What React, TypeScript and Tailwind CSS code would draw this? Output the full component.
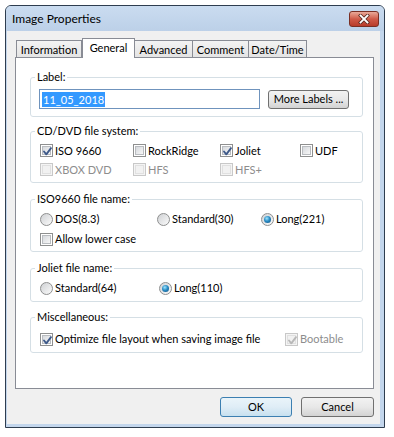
import type { ReactNode } from "react";

const ui = "font-['Lato','Noto_Sans',sans-serif] text-[11px] leading-[14px] text-black";

function CheckMark({ disabled }: { disabled?: boolean }) {
  return (
    <svg viewBox="0 0 13 13" className="absolute inset-0 h-[13px] w-[13px]">
      <path
        d="M3 6.5 L5.3 9.3 L10 3.2"
        fill="none"
        stroke={disabled ? "#b8b8b8" : "#3f5a8a"}
        strokeWidth="1.9"
        strokeLinecap="round"
        strokeLinejoin="round"
      />
    </svg>
  );
}

function Check({ label, checked, disabled }: { label: string; checked?: boolean; disabled?: boolean }) {
  return (
    <div className="flex items-center gap-[2px] whitespace-nowrap">
      <span
        className={`relative block h-[13px] w-[13px] shrink-0 border p-[1px] ${
          disabled ? "border-[#c8c8c8] bg-[#f4f4f4]" : "border-[#8e8f8f] bg-white"
        }`}
      >
        <span
          className={`block h-full w-full border ${
            disabled
              ? "border-[#e0e0e0] bg-[#f1f1f1]"
              : "border-[#b9bcc0] bg-gradient-to-br from-[#d6d9dd] to-[#f7f7f7]"
          }`}
        />
        {checked && <CheckMark disabled={disabled} />}
      </span>
      <span className={disabled ? "text-[#8d8d8d]" : ""}>{label}</span>
    </div>
  );
}

function Radio({ label, checked }: { label: string; checked?: boolean }) {
  return (
    <div className="flex items-center gap-[2px] whitespace-nowrap">
      <span className="flex h-[13px] w-[13px] shrink-0 items-center justify-center rounded-full border border-[#8e8f8f] bg-gradient-to-br from-[#cfd1d4] to-[#fbfbfb]">
        {checked && (
          <span className="block h-[7px] w-[7px] rounded-full bg-[radial-gradient(circle_at_40%_35%,#9fe6ff_0%,#2b8cc4_45%,#0d4f80_100%)]" />
        )}
      </span>
      <span>{label}</span>
    </div>
  );
}

function Group({ title, className, children }: { title: string; className?: string; children: ReactNode }) {
  return (
    <fieldset className={`rounded-[3px] border border-[#d5dfe5] ${className ?? ""}`}>
      <legend className="ml-[4px] px-[2px] leading-[14px]">{title}</legend>
      {children}
    </fieldset>
  );
}

function Tab({ label, active, width }: { label: string; active?: boolean; width: string }) {
  if (active) {
    return (
      <div
        className={`relative z-10 flex h-[20px] ${width} items-start justify-center border border-b-0 border-[#898c95] bg-white pt-[2px]`}
      >
        {label}
      </div>
    );
  }
  return (
    <div
      className={`flex h-[18px] ${width} items-start justify-center border border-b-0 border-l-0 border-[#898c95] bg-gradient-to-b from-[#f3f3f3] to-[#e3e3e3] pt-[2px] first:border-l`}
    >
      {label}
    </div>
  );
}

function Button({ label, def, className }: { label: string; def?: boolean; className?: string }) {
  return (
    <div
      className={`flex items-center justify-center rounded-[3px] border ${
        def
          ? "border-[#3c7fb1] bg-gradient-to-b from-[#eaf4fa] via-[#dfedf6] to-[#c7e0ef]"
          : "border-[#707070] bg-gradient-to-b from-[#f2f2f2] via-[#e8e8e8] to-[#d3d3d3]"
      } ${className ?? ""}`}
    >
      {label}
    </div>
  );
}

export default function App() {
  return (
    <div className={`h-[437px] w-[394px] bg-white pl-[5px] pt-[5px] ${ui}`}>
      <div className="flex h-[423px] w-[380px] flex-col overflow-hidden rounded-t-[6px] border border-[#2e3d4f] bg-[#c3d6ec]">
        {/* Title bar */}
        <div className="flex h-[25px] shrink-0 items-center justify-between bg-gradient-to-b from-[#cadcf0] to-[#bcd0e8] pl-[6px] pr-[5px]">
          <span className="text-[12px]">Image Properties</span>
          <div className="flex h-[16px] w-[30px] items-center justify-center rounded-[3px] border border-[#7a2f24] bg-gradient-to-b from-[#e9a999] via-[#cf5a48] to-[#b83b2a]">
            <svg viewBox="0 0 12 10" className="h-[10px] w-[12px]">
              <path d="M2.5 1.5 L9.5 8.5 M9.5 1.5 L2.5 8.5" stroke="#5a2a22" strokeWidth="3.4" strokeLinecap="square" />
              <path d="M2.5 1.5 L9.5 8.5 M9.5 1.5 L2.5 8.5" stroke="#ffffff" strokeWidth="1.8" strokeLinecap="square" />
            </svg>
          </div>
        </div>

        {/* Frame + client */}
        <div className="flex flex-1 flex-col pb-[3px] pl-[1px] pr-[4px]">
          <div className="flex flex-1 flex-col bg-[#f0f0f0] pl-[8px] pr-[6px] pt-[7px]">
            {/* Tabs */}
            <div className="flex h-[20px] items-end pl-[1px]">
              <Tab label="Information" width="w-[66px]" />
              <Tab label="General" width="w-[53px]" active />
              <Tab label="Advanced" width="w-[58px]" />
              <Tab label="Comment" width="w-[56px]" />
              <Tab label="Date/Time" width="w-[58px]" />
            </div>

            {/* Tab panel */}
            <div className="-mt-[1px] flex h-[332px] flex-col border border-[#898c95] bg-white pl-[14px] pr-[10px] pt-[12px]">
              <Group title="Label:">
                <div className="flex items-center gap-[8px] pb-[7px] pl-[8px] pt-[5px]">
                  <div className="flex h-[20px] w-[221px] items-center border border-[#6f93bd] bg-white pl-[2px]">
                    <span className="bg-[#3399ff] px-[1px] leading-[15px] text-white">11_05_2018</span>
                  </div>
                  <Button label="More Labels ..." className="h-[19px] w-[81px]" />
                </div>
              </Group>

              <Group title="CD/DVD file system:" className="mt-[7px]">
                <div className="grid grid-cols-[93px_87px_80px_auto] pb-[3px] pl-[9px] pt-[3px] [&>div]:h-[19px]">
                  <Check label="ISO 9660" checked />
                  <Check label="RockRidge" />
                  <Check label="Joliet" checked />
                  <Check label="UDF" />
                  <Check label="XBOX DVD" disabled />
                  <Check label="HFS" disabled />
                  <Check label="HFS+" disabled />
                </div>
              </Group>

              <Group title="ISO9660 file name:" className="mt-[9px]">
                <div className="pb-[2px] pl-[9px] pt-[3px]">
                  <div className="grid h-[20px] grid-cols-[117px_104px_auto] items-center">
                    <Radio label="DOS(8.3)" />
                    <Radio label="Standard(30)" />
                    <Radio label="Long(221)" checked />
                  </div>
                  <div className="flex h-[20px] items-center">
                    <Check label="Allow lower case" />
                  </div>
                </div>
              </Group>

              <Group title="Joliet file name:" className="mt-[9px]">
                <div className="mb-[3px] mt-[3px] grid h-[20px] grid-cols-[119px_auto] items-center pl-[9px]">
                  <Radio label="Standard(64)" />
                  <Radio label="Long(110)" checked />
                </div>
              </Group>

              <Group title="Miscellaneous:" className="mt-[8px]">
                <div className="mb-[3px] mt-[5px] grid h-[20px] grid-cols-[245px_auto] items-center pl-[9px]">
                  <Check label="Optimize file layout when saving image file" checked />
                  <Check label="Bootable" checked disabled />
                </div>
              </Group>
            </div>

            {/* Buttons */}
            <div className="mt-[8px] flex justify-end gap-[9px]">
              <Button label="OK" def className="h-[20px] w-[72px]" />
              <Button label="Cancel" className="h-[20px] w-[73px]" />
            </div>
          </div>
        </div>
      </div>
    </div>
  );
}
